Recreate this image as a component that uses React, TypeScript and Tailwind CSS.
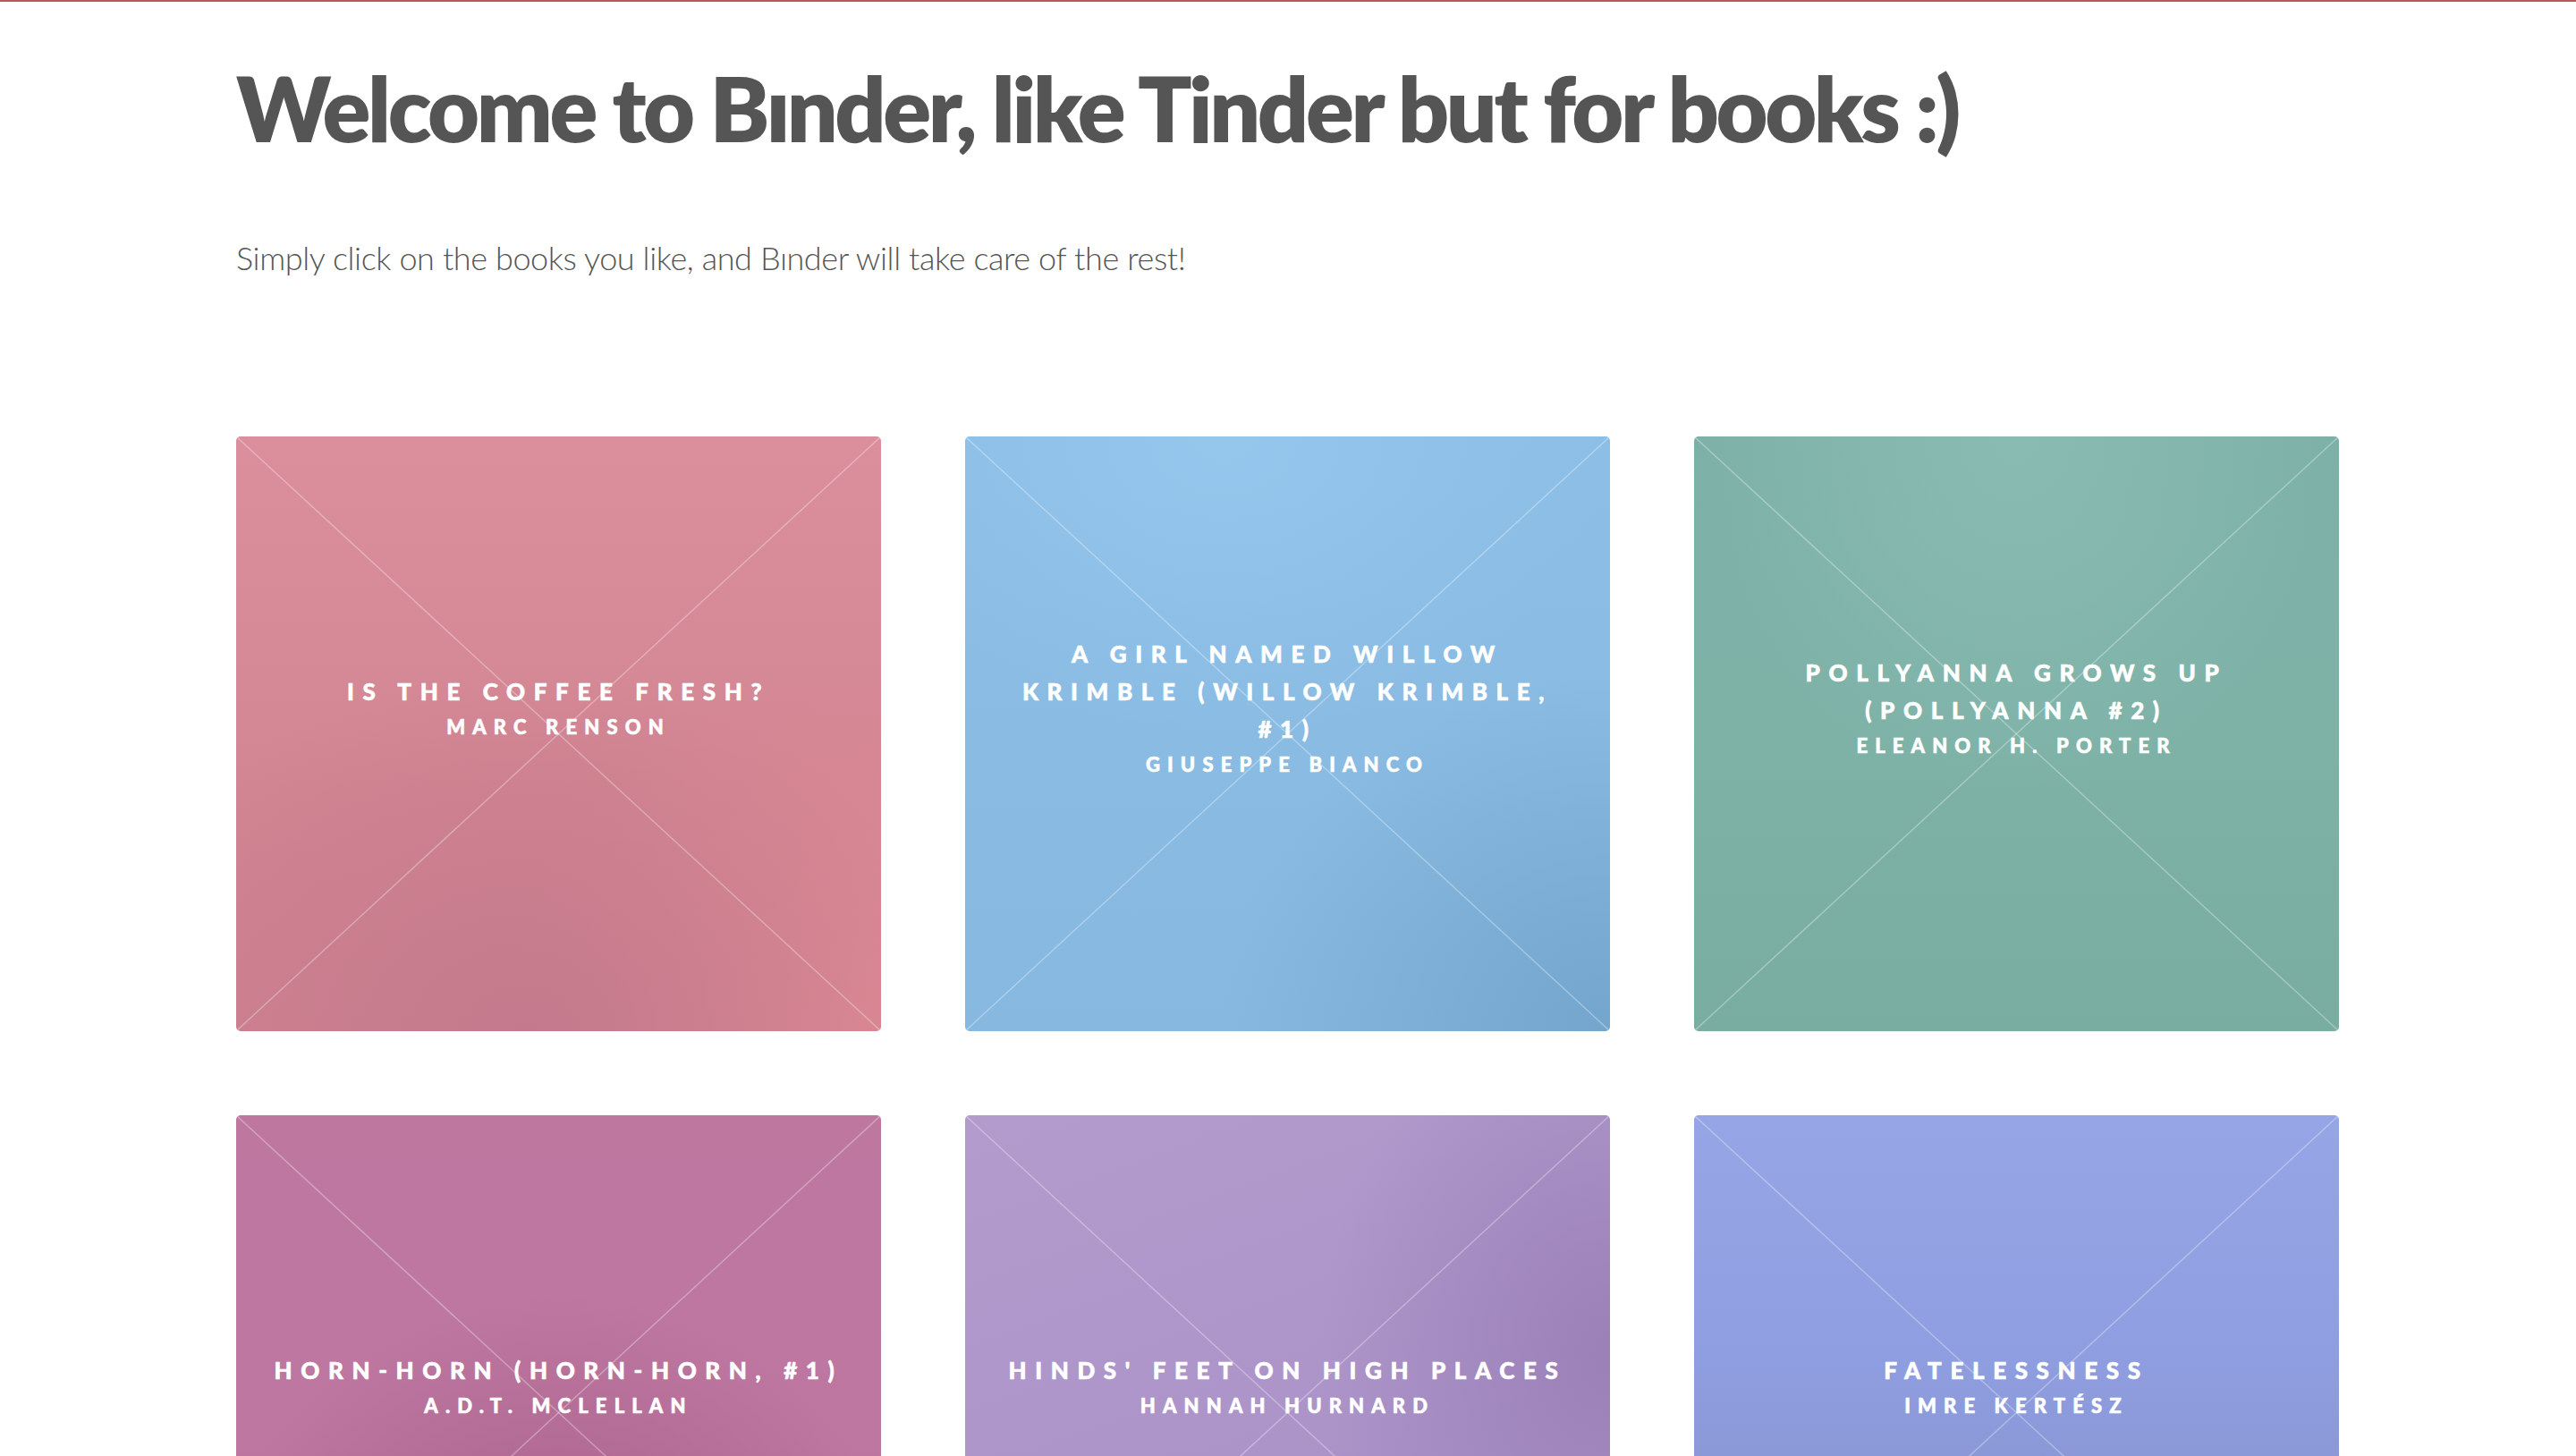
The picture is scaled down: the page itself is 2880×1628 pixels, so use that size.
import React from "react";

type Book = { title: string; author: string; bg: string };

const books: Book[] = [
  {
    title: "Is the coffee fresh?",
    author: "Marc Renson",
    bg: "bg-[radial-gradient(ellipse_70%_60%_at_45%_100%,#c47a8c_0%,rgba(196,122,140,0)_100%),radial-gradient(ellipse_60%_60%_at_100%_100%,#de8a94_0%,rgba(222,138,148,0)_100%),linear-gradient(180deg,#db8e9c_0%,#d28592_60%,#cf8290_100%)]",
  },
  {
    title: "A Girl Named Willow Krimble (Willow Krimble, #1)",
    author: "Giuseppe Bianco",
    bg: "bg-[radial-gradient(ellipse_60%_50%_at_40%_0%,#95c6ec_0%,rgba(149,198,236,0)_100%),radial-gradient(ellipse_60%_60%_at_100%_100%,#74a6cd_0%,rgba(116,166,205,0)_100%),linear-gradient(180deg,#8cbee6_0%,#86b8e0_100%)]",
  },
  {
    title: "Pollyanna Grows Up (Pollyanna #2)",
    author: "Eleanor H. Porter",
    bg: "bg-[radial-gradient(ellipse_50%_60%_at_50%_0%,#8abbb2_0%,rgba(138,187,178,0)_100%),linear-gradient(180deg,#7db1a7_0%,#7eb2a7_50%,#79ada2_100%)]",
  },
  {
    title: "Horn-Horn (Horn-Horn, #1)",
    author: "A.D.T. McLellan",
    bg: "bg-[radial-gradient(ellipse_55%_60%_at_50%_90%,#a75e86_0%,rgba(167,94,134,0)_100%),linear-gradient(180deg,#be78a0_0%,#bb75a0_100%)]",
  },
  {
    title: "Hinds' Feet on High Places",
    author: "Hannah Hurnard",
    bg: "bg-[radial-gradient(ellipse_45%_60%_at_100%_40%,#9a80b7_0%,rgba(154,128,183,0)_100%),linear-gradient(160deg,#b39bcd_0%,#ab93c8_60%,#aa93c7_100%)]",
  },
  {
    title: "Fatelessness",
    author: "Imre Kertész",
    bg: "bg-[linear-gradient(180deg,#95a5e5_0%,#8f9ee0_40%,#8693d0_75%,#818dc6_100%)]",
  },
];

function Card({ book }: { book: Book }) {
  return (
    <div
      className={`relative h-[665px] overflow-hidden rounded-[5px] ${book.bg}`}
    >
      <svg
        className="absolute inset-0 h-full w-full"
        viewBox="0 0 100 100"
        preserveAspectRatio="none"
        aria-hidden="true"
      >
        <line
          x1="0"
          y1="0"
          x2="100"
          y2="100"
          stroke="rgba(255,255,255,0.32)"
          strokeWidth="1.5"
          vectorEffect="non-scaling-stroke"
        />
        <line
          x1="100"
          y1="0"
          x2="0"
          y2="100"
          stroke="rgba(255,255,255,0.32)"
          strokeWidth="1.5"
          vectorEffect="non-scaling-stroke"
        />
      </svg>
      <div className="relative flex h-full flex-col items-center justify-center px-[36px] pb-[58px] text-center uppercase text-white [font-family:Lato,'Noto_Sans',sans-serif] [-webkit-text-stroke:0.6px_white]">
        <div className="text-[26px] leading-[42px] font-black tracking-[0.37em]">
          {book.title}
        </div>
        <div className="text-[22px] leading-[38px] font-black tracking-[0.37em]">
          {book.author}
        </div>
      </div>
    </div>
  );
}

export default function App() {
  return (
    <div className="min-h-screen border-t-2 border-[#b55a5a] bg-white [font-family:Lato,'Noto_Sans',sans-serif]">
      <div className="pl-[264px] pr-[264px] pt-[68px]">
        <h1 className="text-[100px] leading-none font-extrabold tracking-[-0.034em] text-[#555555]">
          Welcome to Bɪnder, like Tinder but for books :)
        </h1>
        <p className="mt-[100px] text-[36px] leading-none font-light tracking-[-0.011em] text-[#555555]">
          Simply click on the books you like, and Bɪnder will take care of the rest!
        </p>
        <div className="mt-[182px] grid w-[2351px] grid-cols-3 gap-[94px] pb-[94px]">
          {books.map((b) => (
            <Card key={b.title} book={b} />
          ))}
        </div>
      </div>
    </div>
  );
}
